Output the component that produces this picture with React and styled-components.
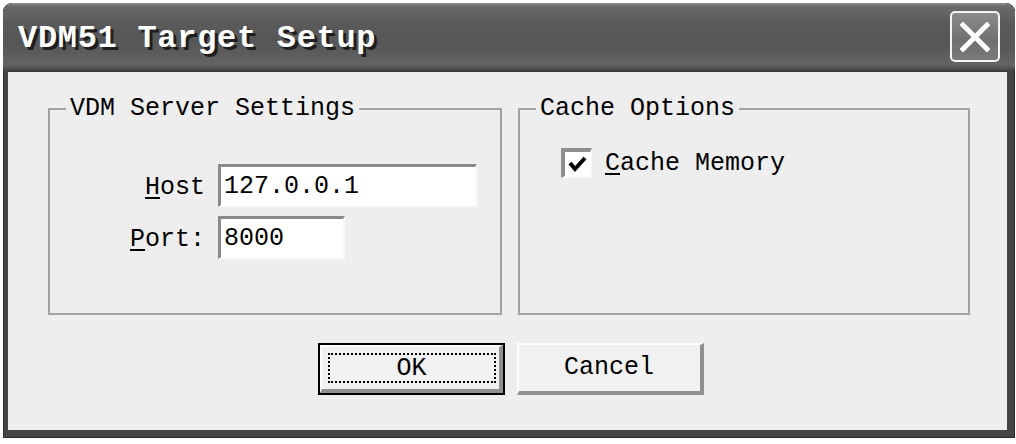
import React from "react";
import styled, { createGlobalStyle } from "styled-components";

const GlobalStyle = createGlobalStyle`
  html, body {
    margin: 0;
    padding: 0;
    background: #ffffff;
  }
  body {
    font-family: "Liberation Mono", "DejaVu Sans Mono", monospace;
  }
`;

const App = () => {
  return (
    <>
      <GlobalStyle />
      <Page>
        <Window>
          <TitleBar>
            <Title>VDM51 Target Setup</Title>
            <CloseButton aria-label="Close">
              <svg width="30" height="30" viewBox="0 0 30 30">
                <path
                  d="M3 3 L27 27 M27 3 L3 27"
                  stroke="#ffffff"
                  strokeWidth="5"
                  strokeLinecap="square"
                />
              </svg>
            </CloseButton>
          </TitleBar>
          <Client>
            <Groups>
              <GroupBox>
                <Legend>VDM Server Settings</Legend>
                <Fields>
                  <Field>
                    <Label>
                      <u>H</u>ost
                    </Label>
                    <TextInput $width={259} defaultValue="127.0.0.1" />
                  </Field>
                  <Field>
                    <Label>
                      <u>P</u>ort:
                    </Label>
                    <TextInput $width={127} defaultValue="8000" />
                  </Field>
                </Fields>
              </GroupBox>
              <GroupBox>
                <Legend>Cache Options</Legend>
                <CheckRow>
                  <CheckBox>
                    <svg width="22" height="20" viewBox="0 0 22 20">
                      <polyline
                        points="3,9 8,15 18,4"
                        fill="none"
                        stroke="#000000"
                        strokeWidth="4"
                      />
                    </svg>
                  </CheckBox>
                  <CheckLabel>
                    <u>C</u>ache Memory
                  </CheckLabel>
                </CheckRow>
              </GroupBox>
            </Groups>
            <Buttons>
              <Button $default>
                <Face>
                  <FocusRing>OK</FocusRing>
                </Face>
              </Button>
              <Button>
                <Face>Cancel</Face>
              </Button>
            </Buttons>
          </Client>
        </Window>
      </Page>
    </>
  );
};

export default App;

const Page = styled.div`
  width: 1016px;
  height: 444px;
  padding: 3px 1px 0 3px;
  box-sizing: border-box;
  background: #ffffff;
`;

const Window = styled.div`
  width: 1012px;
  height: 435px;
  box-sizing: border-box;
  display: flex;
  flex-direction: column;
  background: #454545;
  border-radius: 9px 9px 0 0;
  padding: 0 8px 8px 5px;
  overflow: hidden;
  box-shadow: inset 0 0 0 1px #2a2a2a;
`;

const TitleBar = styled.div`
  height: 67px;
  margin: 0 -8px 0 -5px;
  padding: 4px 15px 0 15px;
  box-sizing: border-box;
  display: flex;
  align-items: center;
  justify-content: space-between;
  background: linear-gradient(
    #8e8e8e 0,
    #6a6a6a 5%,
    #5a5a5a 30%,
    #565656 60%,
    #636363 92%,
    #4a4a4a 100%
  );
  border-radius: 9px 9px 0 0;
`;

const Title = styled.span`
  font-family: "Liberation Mono", "DejaVu Sans Mono", monospace;
  font-weight: bold;
  font-size: 32px;
  letter-spacing: 0.7px;
  color: #ffffff;
  text-shadow: 3px 3px 0 #1e1e1e;
  line-height: 40px;
`;

const CloseButton = styled.button`
  width: 50px;
  height: 51px;
  margin-top: -4px;
  padding: 0;
  box-sizing: border-box;
  display: flex;
  align-items: center;
  justify-content: center;
  border: 2px solid #f4f4f4;
  border-radius: 5px;
  background: linear-gradient(#8c8c8c, #6f6f6f 60%, #7a7a7a);
`;

const Client = styled.div`
  flex: 1;
  display: flex;
  flex-direction: column;
  background: #eeeeee;
  border-top: 2px solid #3e3e3e;
  padding: 24px 0 0 40px;
  box-sizing: border-box;
`;

const Groups = styled.div`
  display: grid;
  grid-template-columns: 454px 452px;
  column-gap: 16px;
`;

const GroupBox = styled.fieldset`
  margin: 0;
  min-width: 0;
  height: 219px;
  box-sizing: border-box;
  border: 2px solid #a3a3a3;
  padding: 0;
`;

const Legend = styled.legend`
  margin-left: 16px;
  padding: 0 4px;
  font-size: 25px;
  line-height: 26px;
  color: #000000;
`;

const Fields = styled.div`
  display: flex;
  flex-direction: column;
  gap: 9px;
  padding-top: 42px;
`;

const Field = styled.div`
  display: flex;
  align-items: center;
`;

const Label = styled.label`
  width: 155px;
  margin-right: 13px;
  text-align: right;
  font-size: 25px;
  line-height: 26px;
  color: #000000;
  padding-top: 4px;

  u {
    text-decoration-thickness: 2px;
    text-underline-offset: 3px;
  }
`;

const TextInput = styled.input`
  width: ${(p) => p.$width}px;
  height: 43px;
  box-sizing: border-box;
  margin: 0;
  padding: 0 0 0 3px;
  border-style: solid;
  border-width: 3px 2px 2px 3px;
  border-color: #8a8a8a #fafafa #fafafa #8a8a8a;
  background: #ffffff;
  font-family: "Liberation Mono", "DejaVu Sans Mono", monospace;
  font-size: 25px;
  color: #000000;
  outline: none;
`;

const CheckRow = styled.div`
  display: flex;
  align-items: center;
  gap: 13px;
  padding: 26px 0 0 41px;
`;

const CheckBox = styled.span`
  width: 31px;
  height: 30px;
  box-sizing: border-box;
  display: flex;
  align-items: center;
  justify-content: center;
  border-style: solid;
  border-width: 4px 2px 2px 4px;
  border-color: #8e8e8e #f8f8f8 #f8f8f8 #8e8e8e;
  background: #ffffff;
`;

const CheckLabel = styled.span`
  font-size: 25px;
  line-height: 26px;
  color: #000000;
  padding-top: 2px;

  u {
    text-decoration-thickness: 2px;
    text-underline-offset: 3px;
  }
`;

const Buttons = styled.div`
  display: flex;
  justify-content: center;
  gap: 12px;
  margin: 28px 0 0 -34px;
`;

const Button = styled.button`
  width: 187px;
  height: 52px;
  padding: 0;
  box-sizing: border-box;
  display: flex;
  background: transparent;
  border: ${(p) => (p.$default ? "2px solid #000000" : "0")};
  font-family: "Liberation Mono", "DejaVu Sans Mono", monospace;
  font-size: 25px;
  color: #000000;
`;

const Face = styled.span`
  flex: 1;
  display: flex;
  align-items: center;
  justify-content: center;
  border-style: solid;
  border-width: 2px 4px 4px 2px;
  border-color: #fdfdfd #909090 #909090 #fdfdfd;
  background: #f1f1f1;
  padding-bottom: 2px;
`;

const FocusRing = styled.span`
  flex: 1;
  align-self: stretch;
  margin: 6px 3px 4px 6px;
  display: flex;
  align-items: center;
  justify-content: center;
  border: 2px dotted #000000;
`;
